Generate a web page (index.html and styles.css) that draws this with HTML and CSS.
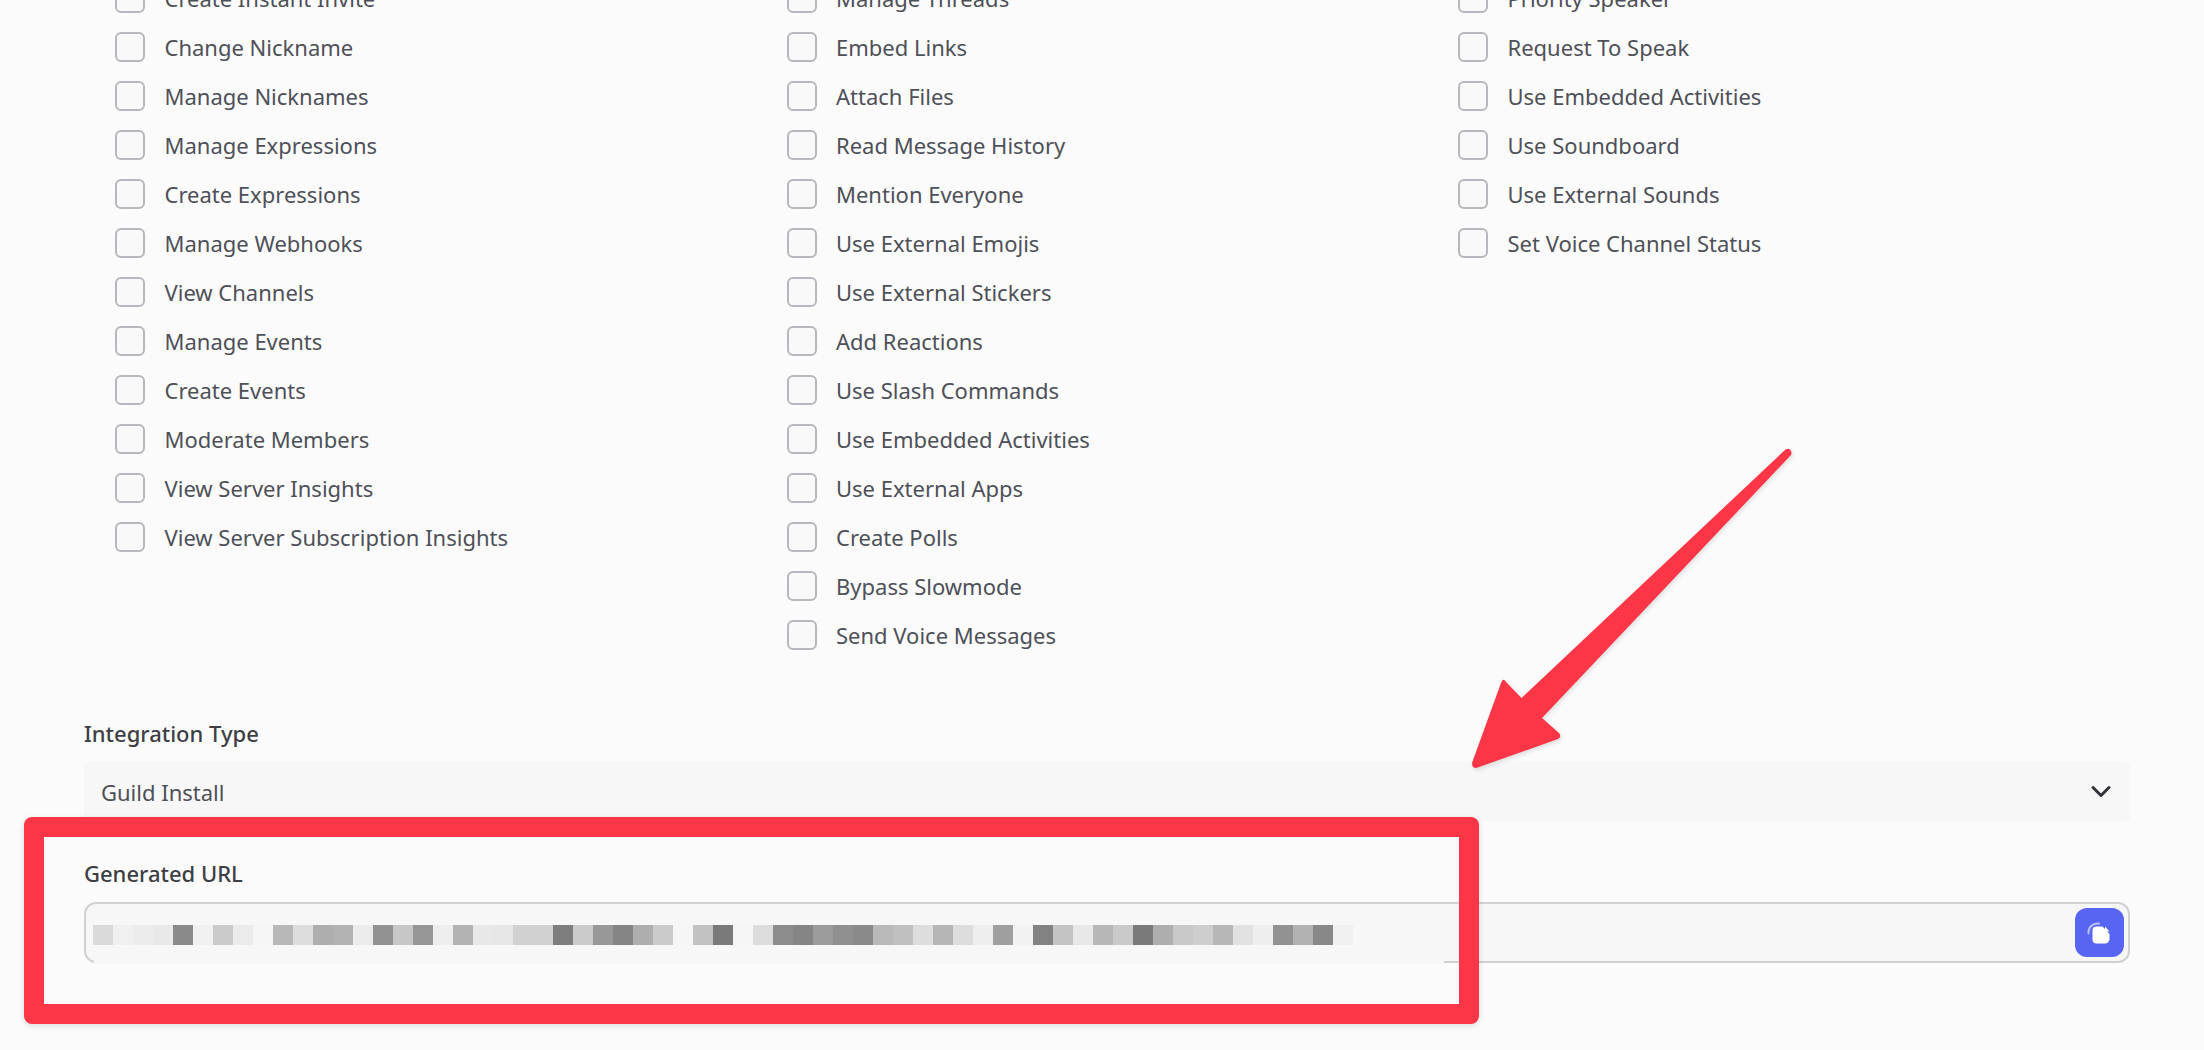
FILE: index.html
```html
<!DOCTYPE html>
<html>
<head>
    <title>URL Generator</title>
    <link rel="stylesheet" href="styles.css">
</head>
<body>

    <div class="scopes">
        <div class="scope-col">
            <label class="scope"><span class="box"></span>Create Instant Invite</label>
            <label class="scope"><span class="box"></span>Change Nickname</label>
            <label class="scope"><span class="box"></span>Manage Nicknames</label>
            <label class="scope"><span class="box"></span>Manage Expressions</label>
            <label class="scope"><span class="box"></span>Create Expressions</label>
            <label class="scope"><span class="box"></span>Manage Webhooks</label>
            <label class="scope"><span class="box"></span>View Channels</label>
            <label class="scope"><span class="box"></span>Manage Events</label>
            <label class="scope"><span class="box"></span>Create Events</label>
            <label class="scope"><span class="box"></span>Moderate Members</label>
            <label class="scope"><span class="box"></span>View Server Insights</label>
            <label class="scope"><span class="box"></span>View Server Subscription Insights</label>
        </div>
        <div class="scope-col">
            <label class="scope"><span class="box"></span>Manage Threads</label>
            <label class="scope"><span class="box"></span>Embed Links</label>
            <label class="scope"><span class="box"></span>Attach Files</label>
            <label class="scope"><span class="box"></span>Read Message History</label>
            <label class="scope"><span class="box"></span>Mention Everyone</label>
            <label class="scope"><span class="box"></span>Use External Emojis</label>
            <label class="scope"><span class="box"></span>Use External Stickers</label>
            <label class="scope"><span class="box"></span>Add Reactions</label>
            <label class="scope"><span class="box"></span>Use Slash Commands</label>
            <label class="scope"><span class="box"></span>Use Embedded Activities</label>
            <label class="scope"><span class="box"></span>Use External Apps</label>
            <label class="scope"><span class="box"></span>Create Polls</label>
            <label class="scope"><span class="box"></span>Bypass Slowmode</label>
            <label class="scope"><span class="box"></span>Send Voice Messages</label>
        </div>
        <div class="scope-col">
            <label class="scope"><span class="box"></span>Priority Speaker</label>
            <label class="scope"><span class="box"></span>Request To Speak</label>
            <label class="scope"><span class="box"></span>Use Embedded Activities</label>
            <label class="scope"><span class="box"></span>Use Soundboard</label>
            <label class="scope"><span class="box"></span>Use External Sounds</label>
            <label class="scope"><span class="box"></span>Set Voice Channel Status</label>
        </div>
    </div>

    <div class="field field-type">
        <div class="field-label">Integration Type</div>
        <div class="select">
            Guild Install
            <svg class="chevron" width="20" height="13" viewBox="0 0 20 13">
                <path d="M2 2.500l8 8 8-8" fill="none" stroke="#313338" stroke-width="3" stroke-linecap="round" stroke-linejoin="round"/>
            </svg>
        </div>
    </div>

    <div class="field">
        <div class="field-label">Generated URL</div>
        <div class="url-box">
            <!-- pixelated url -->
            <div class="url-blur"></div>
            <button class="copy-button">
                <svg width="49" height="49" viewBox="0 0 49 49">
                    <path d="M13.5 25.5C13 19.5 17.5 15 24 15.5" fill="none" stroke="#fff" stroke-opacity="0.6" stroke-width="2" stroke-linecap="round"/>
                    <path d="M21.5 18.5h6l7 7.5v5a4.5 4.5 0 0 1-4.5 4.5h-8.500a4 4 0 0 1-4-4v-9a4 4 0 0 1 4-4z" fill="#fff"/>
                    <path d="M30 18.500l4.500 5h-3a1.500 1.500 0 0 1-1.500-1.500z" fill="#fff"/>
                </svg>
            </button>
        </div>
    </div>

    <!-- annotations on top of the screenshot -->
    <div class="red-box"></div>
    <svg class="red-arrow" width="340" height="340" viewBox="0 0 340 340">
        <path d="M320 3Q324 0 326 4Q327 6 326 8L77 271L94 286Q97 290 93 292L14 320Q7 323 7 316L36 236Q38 230 41 235L56.500 251Z" fill="#fc3646"/>
    </svg>

</body>
</html>
```

FILE: styles.css
```css
body {
    font-family: "Noto Sans", sans-serif;
    font-size: 22px;
    color: #4e5058;
    background-color: #fbfbfb;
    margin: 0;
    padding: 0 74px 0 84px;
    height: 1050px;
    overflow: hidden;
    position: relative;
}

/* Scope checkboxes */
.scopes {
    display: grid;
    grid-template-columns: repeat(3, 671.5px);
    margin-top: -17px;
    margin-left: 31px;
}

.scope-col {
    display: flex;
    flex-direction: column;
    gap: 19px;
}

.scope {
    display: flex;
    align-items: center;
    gap: 19.5px;
    height: 30px;
    white-space: nowrap;
}

.box {
    box-sizing: border-box;
    width: 30px;
    height: 30px;
    border: 2px solid #b7b8bd;
    border-radius: 6px;
    background-color: #f9f9f9;
}

/* Fields at the bottom */
.field {
    margin-top: 37px;
}

.field-type {
    margin-top: 69px;
}

.field-label {
    height: 28px;
    line-height: 28px;
    margin-bottom: 14px;
    font-weight: 500;
    color: #3d3f45;
}

.select {
    display: flex;
    align-items: center;
    justify-content: space-between;
    box-sizing: border-box;
    height: 61px;
    padding: 0 19px 0 17px;
    border-radius: 6px;
    background-color: #f7f7f7;
}

.url-box {
    display: flex;
    align-items: center;
    justify-content: space-between;
    box-sizing: border-box;
    height: 61px;
    margin-top: 15px;
    padding: 0 4px 0 7px;
    border: 2px solid #d0d1d4;
    border-radius: 12px;
    background-color: #f7f7f7;
    position: relative;
}

/* the screenshot was edited here, the bottom border is painted over */
.url-box::after {
    content: "";
    position: absolute;
    left: 8px;
    right: 684px;
    bottom: -3px;
    height: 5px;
    background-color: #f7f7f7;
}

.url-blur {
    width: 1260px;
    height: 20px;
    margin-top: 4px;
    background-image: linear-gradient(90deg,
        #dadada 0 20px, #f0f0f0 0 40px, #ececec 0 60px, #e9e9e9 0 80px, #8a8a8a 0 100px, #f1f1f1 0 120px, #cbcbcb 0 140px,
        #ebebeb 0 160px, #f5f5f5 0 180px, #b8b8b8 0 200px, #dddddd 0 220px, #aeaeae 0 240px, #b3b3b3 0 260px, #ececec 0 280px,
        #929292 0 300px, #c7c7c7 0 320px, #979797 0 340px, #eeeeee 0 360px, #b3b3b3 0 380px, #e8e8e8 0 400px, #e6e6e6 0 420px,
        #d1d1d1 0 460px, #7d7d7d 0 480px, #cbcbcb 0 500px, #989898 0 520px, #858585 0 540px, #aeaeae 0 560px,
        #cbcbcb 0 580px, #f6f6f6 0 600px, #c2c2c2 0 620px, #7a7a7a 0 640px, #f5f5f5 0 660px, #dcdcdc 0 680px, #8c8c8c 0 700px,
        #858585 0 720px, #9b9b9b 0 740px, #909090 0 760px, #8a8a8a 0 780px, #b9b9b9 0 800px, #c0c0c0 0 820px, #dddddd 0 840px,
        #b6b6b6 0 860px, #dddddd 0 880px, #eeeeee 0 900px, #9f9f9f 0 920px, #f2f2f2 0 940px, #828282 0 960px, #c4c4c4 0 980px,
        #e8e8e8 0 1000px, #b7b7b7 0 1020px, #cacaca 0 1040px, #7a7a7a 0 1060px, #aeaeae 0 1080px, #c8c8c8 0 1100px, #cecece 0 1120px,
        #b7b7b7 0 1140px, #e1e1e1 0 1160px, #eeeeee 0 1180px, #929292 0 1200px, #b2b2b2 0 1220px, #888888 0 1240px, #f0f0f0 0 1260px);
}

.copy-button {
    width: 49px;
    height: 49px;
    padding: 0;
    border: none;
    border-radius: 12px;
    background-color: #5865f2;
    cursor: pointer;
}

.copy-button svg {
    display: block;
}

/* Red annotations */
.red-box {
    position: absolute;
    left: 24px;
    top: 817px;
    box-sizing: border-box;
    width: 1455px;
    height: 207px;
    border: 20px solid #fc3646;
    border-radius: 8px;
    box-shadow: 0 2px 6px rgba(0, 0, 0, 0.12);
}

.red-arrow {
    position: absolute;
    left: 1465px;
    top: 447px;
    overflow: visible;
    filter: drop-shadow(1px 2px 2px rgba(0, 0, 0, 0.12));
}
```
